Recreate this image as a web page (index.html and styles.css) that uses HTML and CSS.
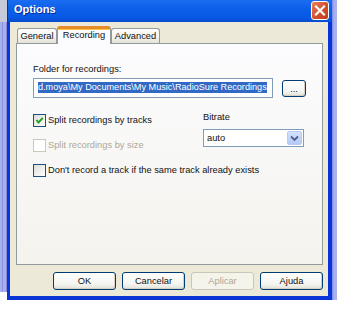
FILE: index.html
```html
<!DOCTYPE html>
<html lang="en">
<head>
    <meta charset="UTF-8">
    <title>Options</title>
    <link rel="stylesheet" href="styles.css">
</head>
<body>
    <div class="desk">
        <div class="behind-left"><div class="behind-top"></div></div>
        <div class="dialog">
            <div class="titlebar">
                <span class="title">Options</span>
                <div class="close">
                    <svg width="16" height="17" viewBox="0 0 16 17">
                        <path d="M4 4.5 L12 12.5 M12 4.5 L4 12.5" stroke="#fff" stroke-width="2.2" stroke-linecap="square"/>
                    </svg>
                </div>
            </div>
            <div class="client">
                <div class="tabs">
                    <div class="tab tab-general">General</div>
                    <div class="tab tab-recording active">Recording</div>
                    <div class="tab tab-advanced">Advanced</div>
                </div>
                <div class="panel">
                    <div class="label">Folder for recordings:</div>
                    <div class="folder-row">
                        <div class="textbox"><span class="sel">d.moya\My Documents\My Music\RadioSure Recordings</span></div>
                        <div class="btn browse">...</div>
                    </div>
                    <div class="split-row">
                        <div class="checks">
                            <div class="check">
                                <span class="box">
                                    <svg width="11" height="11" viewBox="0 0 11 11">
                                        <path d="M2.5 5 L4.5 7.5 L8.8 2.8" fill="none" stroke="#21a121" stroke-width="1.9"/>
                                    </svg>
                                </span>
                                Split recordings by tracks
                            </div>
                            <div class="check disabled"><span class="box"></span>Split recordings by size</div>
                        </div>
                        <div class="bitrate">
                            <div class="label">Bitrate</div>
                            <div class="select">
                                <span class="select-value">auto</span>
                                <span class="drop">
                                    <svg width="9" height="7" viewBox="0 0 9 7">
                                        <path d="M1 1.5 L4.5 5 L8 1.5" fill="none" stroke="#4d6185" stroke-width="1.8"/>
                                    </svg>
                                </span>
                            </div>
                        </div>
                    </div>
                    <div class="check check-last"><span class="box"></span>Don't record a track if the same track already exists</div>
                </div>
                <div class="buttons">
                    <div class="btn">OK</div>
                    <div class="btn">Cancelar</div>
                    <div class="btn disabled">Aplicar</div>
                    <div class="btn">Ajuda</div>
                </div>
            </div>
        </div>
        <div class="behind-right"></div>
    </div>
</body>
</html>
```

FILE: styles.css
```css
body {
    margin: 0;
    background: #fff;
    font-family: "Liberation Sans", Arial, sans-serif;
    font-size: 9.3px;
    color: #111;
}
.desk {
    display: flex;
    align-items: flex-start;
}
.behind-left {
    width: 7px;
    height: 292px;
    background: linear-gradient(to right, #a9b0ec 0 2px, #8a93e0 2px 3px, #a9b0ec 3px 6px, #7f88dc 6px);
}
.behind-top {
    height: 22px;
    background: #c7cad9;
}
.dialog {
    width: 325px;
    display: flex;
    flex-direction: column;
}
.titlebar {
    height: 22px;
    box-sizing: border-box;
    padding: 0 3px 0 6px;
    display: flex;
    justify-content: space-between;
    align-items: flex-start;
    background: linear-gradient(#1a6cf0, #0d5fea 40%, #0758e4 80%, #084ccb);
    border-left: 1px solid #0a2fb8;
}
.title {
    color: #fff;
    font-weight: bold;
    font-size: 11px;
    line-height: 11px;
    margin-top: 4px;
    text-shadow: 1px 1px #0b2a9c;
}
.close {
    width: 18px;
    height: 19px;
    margin-top: 1px;
    box-sizing: border-box;
    border: 1px solid #fff;
    border-radius: 3px;
    background: linear-gradient(135deg, #e9805e, #d5532f 50%, #c13a19);
    display: flex;
    align-items: center;
    justify-content: center;
}
.client {
    background: #ece9d8;
    border: solid #0a34d6;
    border-width: 0 4px 4px 3px;
    padding: 4px 5px 6px 6px;
}
.tabs {
    height: 18px;
    display: flex;
    align-items: flex-end;
    padding-left: 1px;
}
.tab {
    height: 15px;
    margin-bottom: 1px;
    box-sizing: border-box;
    border: 1px solid #919b9c;
    border-bottom: none;
    border-radius: 3px 3px 0 0;
    background: linear-gradient(#fefefe, #f3f2ee 60%, #e4e2d8);
    line-height: 15px;
    text-align: center;
}
.tab-general {
    width: 40px;
}
.tab-recording {
    width: 54px;
}
.tab-advanced {
    width: 49px;
}
.tab.active {
    height: 18px;
    margin-bottom: 0;
    position: relative;
    z-index: 1;
    background: #fcfcfe;
    border-top: 3px solid #e68b2c;
    border-radius: 3px 3px 0 0;
    line-height: 13px;
    box-shadow: inset 0 1px #ffc73c;
}
.panel {
    height: 222px;
    margin-top: -1px;
    box-sizing: border-box;
    border: 1px solid #919b9c;
    background: linear-gradient(#fcfcfe, #f4f3ee);
    padding: 20px 16px 0 16px;
}
.label {
    line-height: 11px;
}
.folder-row {
    display: flex;
    align-items: flex-start;
    gap: 9px;
    margin-top: 3px;
}
.textbox {
    width: 240px;
    height: 20px;
    box-sizing: border-box;
    border: 1px solid #7f9db9;
    background: #fff;
    padding: 3px 0 0 4px;
    overflow: hidden;
    white-space: nowrap;
}
.sel {
    display: inline-block;
    background: #316ac5;
    color: #fff;
    font-size: 9.15px;
    line-height: 11px;
}
.btn {
    width: 63px;
    height: 18px;
    box-sizing: border-box;
    border: 1px solid #003c74;
    border-radius: 3px;
    background: linear-gradient(#ffffff, #f4f4f0 70%, #e3e1d6);
    box-shadow: inset -1px -1px #d6d0c5;
    text-align: center;
    line-height: 16px;
}
.btn.disabled {
    border-color: #c9c7ba;
    color: #aca899;
    background: #f5f4ea;
    box-shadow: none;
}
.browse {
    width: 24px;
    height: 17px;
    margin-top: 2px;
    line-height: 17px;
}
.split-row {
    display: flex;
    margin-top: 14px;
}
.checks {
    width: 170px;
    padding-top: 2px;
}
.check {
    display: flex;
    align-items: center;
    gap: 2px;
    height: 13px;
    line-height: 11px;
    white-space: nowrap;
}
.check + .check {
    margin-top: 12px;
}
.check-last {
    margin-top: 12px;
}
.box {
    width: 13px;
    height: 13px;
    box-sizing: border-box;
    border: 1px solid #1c5180;
    background: linear-gradient(135deg, #dcdcd7, #fff);
    display: flex;
    align-items: center;
    justify-content: center;
    flex-shrink: 0;
}
.check.disabled {
    color: #aca899;
}
.check.disabled .box {
    border-color: #cac8bb;
    background: #fff;
}
.bitrate .label {
    margin-bottom: 6px;
}
.select {
    width: 101px;
    height: 18px;
    box-sizing: border-box;
    border: 1px solid #7f9db9;
    background: #fff;
    display: flex;
    align-items: center;
    justify-content: space-between;
    padding: 1px;
}
.select-value {
    padding-left: 2px;
    line-height: 11px;
}
.drop {
    width: 15px;
    height: 14px;
    box-sizing: border-box;
    border: 1px solid #b9c9f3;
    border-radius: 2px;
    background: linear-gradient(#d4e1fc, #b5c9f7);
    display: flex;
    align-items: center;
    justify-content: center;
}
.buttons {
    display: flex;
    justify-content: flex-end;
    gap: 6px;
    margin-top: 7px;
}
.behind-right {
    width: 5px;
    height: 300px;
    background: linear-gradient(to right, #6f86ea, #a9b0ec 2px);
}
```
